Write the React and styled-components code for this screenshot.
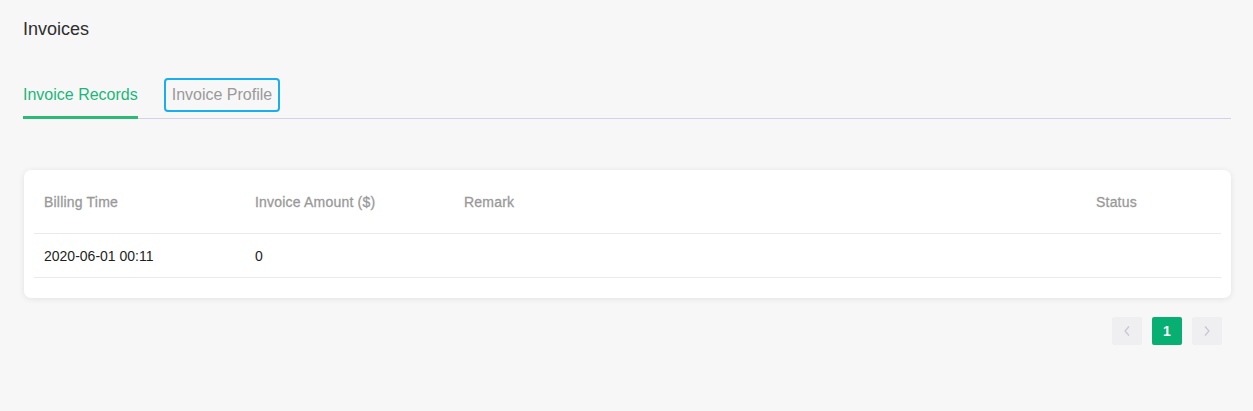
import React from "react";
import styled, { createGlobalStyle } from "styled-components";

const Global = createGlobalStyle`
  html, body { margin: 0; padding: 0; background: #f7f7f7; }
  body { font-family: "Helvetica Neue", "Liberation Sans", Arial, sans-serif; }
`;

const Page = styled.div`
  padding: 17px 22px 0 23px;
  color: #333;
`;

const Title = styled.h1`
  margin: 0;
  font-size: 18px;
  font-weight: 400;
  line-height: 24px;
  color: #2e2e2e;
`;

const TabBar = styled.div`
  display: flex;
  align-items: flex-end;
  gap: 26px;
  margin-top: 37px;
  border-bottom: 1px solid #d4d3e6;
`;

const Tab = styled.button`
  position: relative;
  background: none;
  border: ${(p) => (p.$active ? "none" : `2px solid ${p.$focused ? "#19aef0" : "transparent"}`)};
  border-radius: 4px;
  padding: ${(p) => (p.$active ? "7px 0 0" : "0 6px")};
  margin: 0 0 ${(p) => (p.$active ? 0 : 6)}px;
  height: ${(p) => (p.$active ? 40 : 34)}px;
  font-family: inherit;
  font-size: 16px;
  line-height: 20px;
  color: ${(p) => (p.$active ? "#1ab77a" : "#9a9a9a")};
  display: flex;
  align-items: ${(p) => (p.$active ? "flex-start" : "center")};
  cursor: pointer;
  &::after {
    content: "";
    display: ${(p) => (p.$active ? "block" : "none")};
    position: absolute;
    left: 0;
    right: 0;
    bottom: -1px;
    height: 3px;
    background: #2cba78;
  }
`;

const Card = styled.div`
  margin-top: 51px;
  margin-left: 1px;
  background: #fff;
  border-radius: 7px;
  box-shadow: 0 1px 6px rgba(0, 0, 0, 0.09);
  padding: 0 10px 20px;
`;

const Row = styled.div`
  display: grid;
  grid-template-columns: 211px 209px 632px 1fr;
  align-items: center;
  height: ${(p) => p.$h}px;
  border-bottom: 1px solid #e9e9ee;
  padding-left: 10px;
`;

const HeadCell = styled.div`
  font-size: 14px;
  letter-spacing: 0.2px;
  color: #999;
  -webkit-text-stroke: 0.3px #999;
  padding-top: 1px;
`;

const Cell = styled.div`
  font-size: 14px;
  color: #1e1e1e;
`;

const Pager = styled.div`
  display: flex;
  justify-content: flex-end;
  gap: 10px;
  margin-top: 19px;
  padding-right: 9px;
`;

const PageBtn = styled.button`
  width: 30px;
  height: 28px;
  border: none;
  border-radius: 2px;
  background: ${(p) => (p.$active ? "#07b072" : "#efeff1")};
  color: ${(p) => (p.$active ? "#fff" : "#c4c4d0")};
  font-family: inherit;
  font-weight: 700;
  font-size: 14px;
  display: flex;
  align-items: center;
  justify-content: center;
  padding: 0;
`;

const Chevron = ({ dir }) => (
  <svg width="10" height="12" viewBox="0 0 10 12" fill="none">
    <path
      d={dir === "left" ? "M7 1.5 L3 6 L7 10.5" : "M3 1.5 L7 6 L3 10.5"}
      stroke="#c6c6d2"
      strokeWidth="1.2"
    />
  </svg>
);

export default function App() {
  return (
    <>
      <Global />
      <Page>
        <Title>Invoices</Title>
        <TabBar>
          <Tab $active>Invoice Records</Tab>
          <Tab $focused>Invoice Profile</Tab>
        </TabBar>
        <Card>
          <Row $h={63}>
            <HeadCell>Billing Time</HeadCell>
            <HeadCell>Invoice Amount ($)</HeadCell>
            <HeadCell>Remark</HeadCell>
            <HeadCell>Status</HeadCell>
          </Row>
          <Row $h={43}>
            <Cell>2020-06-01 00:11</Cell>
            <Cell>0</Cell>
            <Cell />
            <Cell />
          </Row>
        </Card>
        <Pager>
          <PageBtn aria-label="previous"><Chevron dir="left" /></PageBtn>
          <PageBtn $active>1</PageBtn>
          <PageBtn aria-label="next"><Chevron dir="right" /></PageBtn>
        </Pager>
      </Page>
    </>
  );
}
